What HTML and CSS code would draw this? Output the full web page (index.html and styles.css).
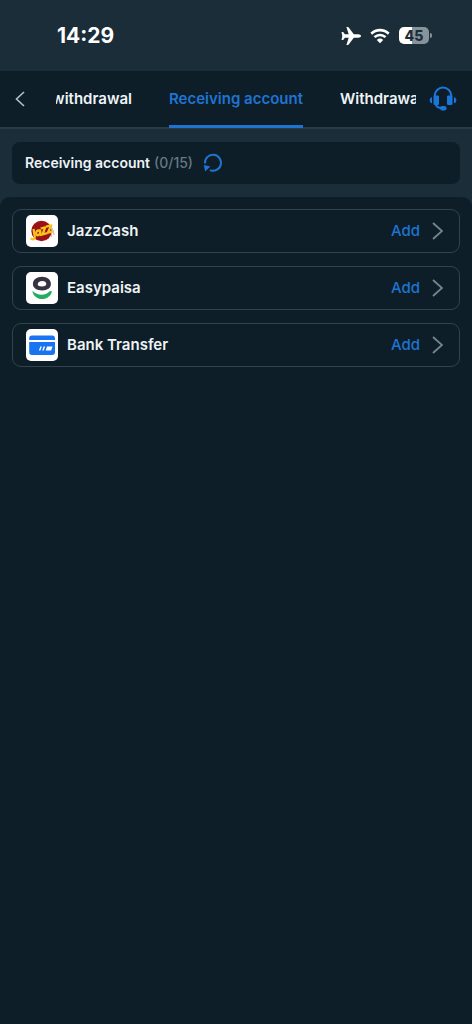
FILE: index.html
```html
<!DOCTYPE html>
<html lang="en">
<head>
<meta charset="utf-8">
<meta name="viewport" content="width=device-width, initial-scale=1">
<title>Receiving account</title>
<link rel="stylesheet" href="styles.css">
</head>
<body>
<div class="status">
  <time class="clock">14:29</time>
  <div class="indicators">
    <svg class="plane" viewBox="0 0 20 18" aria-hidden="true"><path d="M20 9c0-1-1.300-1.700-2.700-1.700H12.800L7.700.6C7.500.3 7.200.1 6.800.1H5.400l2.300 7.200H3.900L2.200 5.100H.5L1.300 9 .5 12.900h1.700l1.700-2.200h3.800L5.400 17.900h1.400c.4 0 .7-.2.9-.5l5.100-6.700h4.500c1.400 0 2.700-.7 2.700-1.700z"/></svg>
    <svg class="wifi" viewBox="0 0 20 16" aria-hidden="true"><path class="arc" d="M1.300 5.700a12.400 12.400 0 0 1 17.400 0M4.500 9.200a7.800 7.800 0 0 1 11 0"/><path d="M10 15.200l3.200-3.300a4.600 4.600 0 0 0-6.400 0z"/></svg>
    <div class="battery"><span class="level">45</span><span class="cap"></span></div>
  </div>
</div>
<header class="header">
  <button class="back" aria-label="Back"><svg viewBox="0 0 10 16" aria-hidden="true"><path d="M9 1L1.500 8 9 15"/></svg></button>
  <nav class="tabs">
    <button class="tab tab-start">withdrawal</button>
    <button class="tab tab-active" aria-current="page">Receiving account</button>
    <button class="tab tab-end">Withdrawal</button>
  </nav>
  <button class="support" aria-label="Support">
    <svg viewBox="0 0 28 26" aria-hidden="true"><path class="band" d="M5.700 10.500V9.800a8.300 8.300 0 0 1 16.600 0v.7M6.800 18.200c.3 3.200 2.600 3.900 6.200 3.900"/><rect x="4.500" y="9.500" width="5.500" height="9.500" rx="1.300"/><rect x="18" y="9.500" width="5.500" height="9.500" rx="1.300"/><path d="M3 11.200v6c-1.400-.1-2.300-1.300-2.300-3s.9-2.900 2.300-3zM25 11.200v6c1.400-.1 2.300-1.300 2.300-3s-.9-2.900-2.300-3z"/><rect x="11" y="20" width="6.500" height="4.500" rx="2.200"/></svg>
  </button>
</header>
<section class="summary">
  <div class="summary-card">
    <h1 class="summary-title">Receiving account</h1>
    <span class="count">(0/15)</span>
    <button class="refresh" aria-label="Refresh"><svg viewBox="0 0 20 20" aria-hidden="true"><path class="ring" d="M2 10.500a8 8 0 1 1 4.800 6.600"/><path d="M.8 12l6.600 1.500-5.200 5z"/></svg></button>
  </div>
</section>
<main class="panel">
  <button class="row">
    <svg class="logo" viewBox="0 0 32 32" aria-hidden="true"><rect width="32" height="32" rx="5" fill="#fff"/><circle cx="15.500" cy="16" r="10.200" fill="#9d1016"/><path d="M24 11c2.500 2.500 3.800 5 4 9M24 16c1 2 1.600 3.500 1.600 6" fill="none" stroke="#c78276" stroke-width=".7"/><g fill="none" stroke="#f8c51c" stroke-width="2.300" stroke-linejoin="round"><path d="M7.500 14l1.300 7.500c.2 2.700-1.800 3.700-4.300 1.900"/><path d="M13.900 15.700c-3-.8-4.100 1.200-3.600 3.300.5 2 3.100 1.300 3.700-.6l.1-3 .8 5.600"/><path d="M14.700 13.500l4.500-1.200-2.700 7.200 4.700-1.300M20 11.700l5.300-1.400-3.500 7.400 5-1.300"/></g></svg>
    <span class="name">JazzCash</span><span class="add">Add</span>
    <svg class="chevron" viewBox="0 0 11 18" aria-hidden="true"><path d="M1 1l9 8-9 8"/></svg>
  </button>
  <button class="row">
    <svg class="logo" viewBox="0 0 32 32" aria-hidden="true"><rect width="32" height="32" rx="5" fill="#fff"/><path fill="#373343" fill-rule="evenodd" d="M16 4.800c5.200 0 8.900 2.900 8.900 7.300 0 4-3.500 6.300-8.600 6.300-5.500 0-9.400-2.300-9.400-6.400 0-4.300 3.900-7.200 9.100-7.200zm.3 4.200c-2.700 0-4.600 1.400-4.600 3.200 0 1.500 1.600 2.200 4.400 2.200 2.700 0 4.200-.8 4.200-2.400 0-1.700-1.500-3-4-3z"/><path fill="#24ad62" d="M6.300 18.700c5.500 5.400 12.700 5.300 17.500.5.700-.7 2.300-.1 2 .9-1.200 4.300-4.900 7-9.700 7-5 0-8.900-3.300-9.800-8.400z"/></svg>
    <span class="name">Easypaisa</span><span class="add">Add</span>
    <svg class="chevron" viewBox="0 0 11 18" aria-hidden="true"><path d="M1 1l9 8-9 8"/></svg>
  </button>
  <button class="row">
    <svg class="logo" viewBox="0 0 32 32" aria-hidden="true"><rect width="32" height="32" rx="5" fill="#fff"/><path fill="#1874f3" d="M3.200 11V9.200C3.200 7.500 4.300 6.500 6 6.500h20.200c1.700 0 2.800 1 2.800 2.700V11zM3.200 13H29v10.200c0 1.700-1.100 2.800-2.800 2.800H6c-1.700 0-2.800-1.100-2.800-2.800z"/><path fill="#fff" d="M14.300 17.500h1.500l-1.400 4h-1.500zM17.600 17.500h1.500l-1.400 4h-1.500zM21 17.500h5.500l-1.400 4h-5.500z"/></svg>
    <span class="name">Bank Transfer</span><span class="add">Add</span>
    <svg class="chevron" viewBox="0 0 11 18" aria-hidden="true"><path d="M1 1l9 8-9 8"/></svg>
  </button>
</main>
</body>
</html>
```
FILE: styles.css
```css
* { box-sizing: border-box; }
body {
  margin: 0;
  min-height: 100vh;
  display: flex;
  flex-direction: column;
  background: #1b2d38;
  color: #eef3f6;
  font-family: Inter, "Liberation Sans", sans-serif;
  font-size: 15px;
  font-weight: 500;
}
button {
  margin: 0;
  padding: 0;
  border: 0;
  background: none;
  color: inherit;
  font: inherit;
  cursor: pointer;
}
svg { display: block; flex: none; }
.status {
  height: 71px;
  padding: 0 40px 0 57px;
  display: flex;
  align-items: center;
  justify-content: space-between;
  color: #fff;
}
.clock { font-size: 21px; font-weight: 700; }
.indicators { display: flex; align-items: center; gap: 9px; }
.plane { width: 20px; height: 18px; fill: #fff; }
.wifi { width: 20px; height: 16px; fill: #fff; }
.arc { fill: none; stroke: #fff; stroke-width: 2.600; }
.battery { display: flex; align-items: center; gap: 1px; }
.level {
  width: 30px;
  border-radius: 5px;
  background: linear-gradient(90deg, #fff 45%, #87939a 45%);
  color: #1b2d38;
  font-size: 14px;
  font-weight: 800;
  line-height: 17px;
  text-align: center;
}
.cap { width: 2px; height: 5px; border-radius: 0 2px 2px 0; background: #87939a; }
.header {
  height: 58px;
  display: grid;
  grid-template-columns: 56px minmax(0, 1fr) 56px;
  background: #0d1e29;
  border-bottom: 2px solid #2b3b46;
}
.back { padding-left: 15px; }
.back svg { width: 10px; height: 16px; fill: none; stroke: #b4c0c9; stroke-width: 1.600; }
.tabs {
  display: grid;
  grid-template-columns: minmax(0, 1fr) auto minmax(0, 1fr);
  gap: 37px;
  margin-bottom: -1px;
}
.tab {
  padding-bottom: 2px;
  display: flex;
  align-items: center;
  overflow: hidden;
  font-weight: 600;
  white-space: nowrap;
}
.tab-start { justify-content: flex-end; }
.tab-end { justify-content: flex-start; }
.tab-active { color: #1f74d2; box-shadow: inset 0 -3px #1f74d2; }
.support { padding-right: 2px; display: flex; align-items: center; justify-content: center; }
.support svg { width: 28px; height: 26px; fill: #1b76dc; }
.band { fill: none; stroke: #1b76dc; stroke-width: 2; }
.summary { padding: 13px 12px; }
.summary-card {
  height: 42px;
  padding: 0 13px 1px;
  display: flex;
  align-items: center;
  gap: 4px;
  border-radius: 8px;
  background: #0d1e29;
}
.summary-title { margin: 0; font-size: 14px; font-weight: 600; }
.count { color: #687780; font-size: 14px; }
.refresh { margin-left: 6px; }
.refresh svg { width: 20px; height: 20px; fill: #1f74d2; }
.ring { fill: none; stroke: #1f74d2; stroke-width: 2; }
.panel {
  flex: 1;
  padding: 12px;
  display: flex;
  flex-direction: column;
  gap: 13px;
  border-radius: 10px 10px 0 0;
  background: #0d1e29;
}
.row {
  height: 44px;
  padding: 0 16px 0 13px;
  display: flex;
  align-items: center;
  border: 1px solid #30444e;
  border-radius: 9px;
  text-align: left;
}
.logo { width: 32px; height: 32px; margin-right: 9px; }
.name, .add { padding-bottom: 2px; }
.name { flex: 1; font-weight: 600; }
.add { color: #1f74d2; }
.chevron { width: 11px; height: 18px; margin-left: 12px; fill: none; stroke: #77858e; stroke-width: 1.800; }
```
